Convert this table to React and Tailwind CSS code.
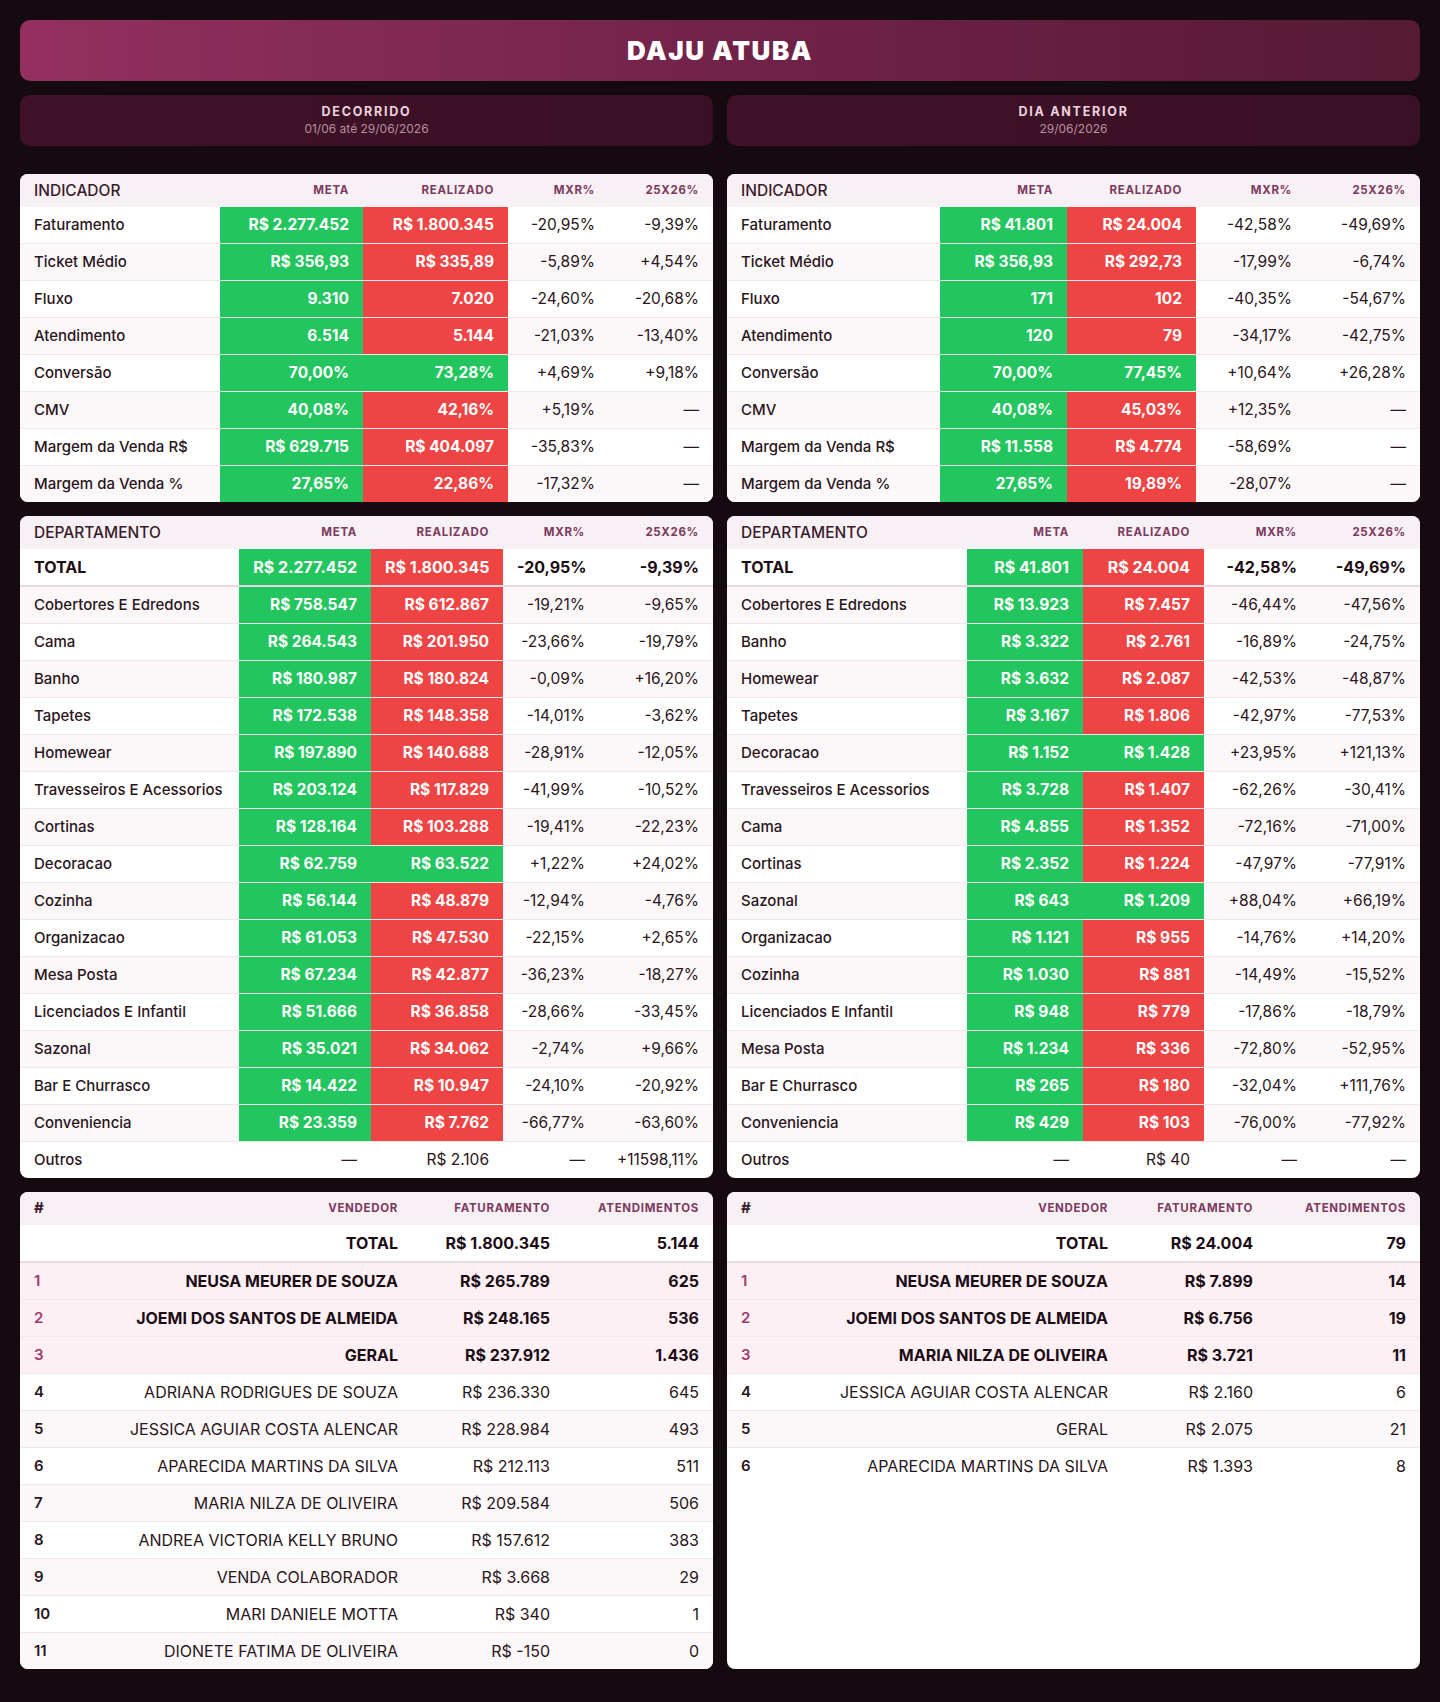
import React from 'react';

const indLeft = [
  ['Faturamento', 'R$ 2.277.452', 'R$ 1.800.345', 'r', '-20,95%', '-9,39%'],
  ['Ticket Médio', 'R$ 356,93', 'R$ 335,89', 'r', '-5,89%', '+4,54%'],
  ['Fluxo', '9.310', '7.020', 'r', '-24,60%', '-20,68%'],
  ['Atendimento', '6.514', '5.144', 'r', '-21,03%', '-13,40%'],
  ['Conversão', '70,00%', '73,28%', 'g', '+4,69%', '+9,18%'],
  ['CMV', '40,08%', '42,16%', 'r', '+5,19%', '—'],
  ['Margem da Venda R$', 'R$ 629.715', 'R$ 404.097', 'r', '-35,83%', '—'],
  ['Margem da Venda %', '27,65%', '22,86%', 'r', '-17,32%', '—'],
];

const indRight = [
  ['Faturamento', 'R$ 41.801', 'R$ 24.004', 'r', '-42,58%', '-49,69%'],
  ['Ticket Médio', 'R$ 356,93', 'R$ 292,73', 'r', '-17,99%', '-6,74%'],
  ['Fluxo', '171', '102', 'r', '-40,35%', '-54,67%'],
  ['Atendimento', '120', '79', 'r', '-34,17%', '-42,75%'],
  ['Conversão', '70,00%', '77,45%', 'g', '+10,64%', '+26,28%'],
  ['CMV', '40,08%', '45,03%', 'r', '+12,35%', '—'],
  ['Margem da Venda R$', 'R$ 11.558', 'R$ 4.774', 'r', '-58,69%', '—'],
  ['Margem da Venda %', '27,65%', '19,89%', 'r', '-28,07%', '—'],
];

const depLeft = {
  total: ['TOTAL', 'R$ 2.277.452', 'R$ 1.800.345', 'r', '-20,95%', '-9,39%'],
  rows: [
    ['Cobertores E Edredons', 'R$ 758.547', 'R$ 612.867', 'r', '-19,21%', '-9,65%'],
    ['Cama', 'R$ 264.543', 'R$ 201.950', 'r', '-23,66%', '-19,79%'],
    ['Banho', 'R$ 180.987', 'R$ 180.824', 'r', '-0,09%', '+16,20%'],
    ['Tapetes', 'R$ 172.538', 'R$ 148.358', 'r', '-14,01%', '-3,62%'],
    ['Homewear', 'R$ 197.890', 'R$ 140.688', 'r', '-28,91%', '-12,05%'],
    ['Travesseiros E Acessorios', 'R$ 203.124', 'R$ 117.829', 'r', '-41,99%', '-10,52%'],
    ['Cortinas', 'R$ 128.164', 'R$ 103.288', 'r', '-19,41%', '-22,23%'],
    ['Decoracao', 'R$ 62.759', 'R$ 63.522', 'g', '+1,22%', '+24,02%'],
    ['Cozinha', 'R$ 56.144', 'R$ 48.879', 'r', '-12,94%', '-4,76%'],
    ['Organizacao', 'R$ 61.053', 'R$ 47.530', 'r', '-22,15%', '+2,65%'],
    ['Mesa Posta', 'R$ 67.234', 'R$ 42.877', 'r', '-36,23%', '-18,27%'],
    ['Licenciados E Infantil', 'R$ 51.666', 'R$ 36.858', 'r', '-28,66%', '-33,45%'],
    ['Sazonal', 'R$ 35.021', 'R$ 34.062', 'r', '-2,74%', '+9,66%'],
    ['Bar E Churrasco', 'R$ 14.422', 'R$ 10.947', 'r', '-24,10%', '-20,92%'],
    ['Conveniencia', 'R$ 23.359', 'R$ 7.762', 'r', '-66,77%', '-63,60%'],
  ],
  outros: ['Outros', '—', 'R$ 2.106', '', '—', '+11598,11%'],
};

const depRight = {
  total: ['TOTAL', 'R$ 41.801', 'R$ 24.004', 'r', '-42,58%', '-49,69%'],
  rows: [
    ['Cobertores E Edredons', 'R$ 13.923', 'R$ 7.457', 'r', '-46,44%', '-47,56%'],
    ['Banho', 'R$ 3.322', 'R$ 2.761', 'r', '-16,89%', '-24,75%'],
    ['Homewear', 'R$ 3.632', 'R$ 2.087', 'r', '-42,53%', '-48,87%'],
    ['Tapetes', 'R$ 3.167', 'R$ 1.806', 'r', '-42,97%', '-77,53%'],
    ['Decoracao', 'R$ 1.152', 'R$ 1.428', 'g', '+23,95%', '+121,13%'],
    ['Travesseiros E Acessorios', 'R$ 3.728', 'R$ 1.407', 'r', '-62,26%', '-30,41%'],
    ['Cama', 'R$ 4.855', 'R$ 1.352', 'r', '-72,16%', '-71,00%'],
    ['Cortinas', 'R$ 2.352', 'R$ 1.224', 'r', '-47,97%', '-77,91%'],
    ['Sazonal', 'R$ 643', 'R$ 1.209', 'g', '+88,04%', '+66,19%'],
    ['Organizacao', 'R$ 1.121', 'R$ 955', 'r', '-14,76%', '+14,20%'],
    ['Cozinha', 'R$ 1.030', 'R$ 881', 'r', '-14,49%', '-15,52%'],
    ['Licenciados E Infantil', 'R$ 948', 'R$ 779', 'r', '-17,86%', '-18,79%'],
    ['Mesa Posta', 'R$ 1.234', 'R$ 336', 'r', '-72,80%', '-52,95%'],
    ['Bar E Churrasco', 'R$ 265', 'R$ 180', 'r', '-32,04%', '+111,76%'],
    ['Conveniencia', 'R$ 429', 'R$ 103', 'r', '-76,00%', '-77,92%'],
  ],
  outros: ['Outros', '—', 'R$ 40', '', '—', '—'],
};

const sellersLeft = {
  total: ['R$ 1.800.345', '5.144'],
  rows: [
    ['NEUSA MEURER DE SOUZA', 'R$ 265.789', '625'],
    ['JOEMI DOS SANTOS DE ALMEIDA', 'R$ 248.165', '536'],
    ['GERAL', 'R$ 237.912', '1.436'],
    ['ADRIANA RODRIGUES DE SOUZA', 'R$ 236.330', '645'],
    ['JESSICA AGUIAR COSTA ALENCAR', 'R$ 228.984', '493'],
    ['APARECIDA MARTINS DA SILVA', 'R$ 212.113', '511'],
    ['MARIA NILZA DE OLIVEIRA', 'R$ 209.584', '506'],
    ['ANDREA VICTORIA KELLY BRUNO', 'R$ 157.612', '383'],
    ['VENDA COLABORADOR', 'R$ 3.668', '29'],
    ['MARI DANIELE MOTTA', 'R$ 340', '1'],
    ['DIONETE FATIMA DE OLIVEIRA', 'R$ -150', '0'],
  ],
};

const sellersRight = {
  total: ['R$ 24.004', '79'],
  rows: [
    ['NEUSA MEURER DE SOUZA', 'R$ 7.899', '14'],
    ['JOEMI DOS SANTOS DE ALMEIDA', 'R$ 6.756', '19'],
    ['MARIA NILZA DE OLIVEIRA', 'R$ 3.721', '11'],
    ['JESSICA AGUIAR COSTA ALENCAR', 'R$ 2.160', '6'],
    ['GERAL', 'R$ 2.075', '21'],
    ['APARECIDA MARTINS DA SILVA', 'R$ 1.393', '8'],
  ],
};

const thSmall = 'h-[33px] px-[14px] text-right text-[11.5px] font-bold tracking-[0.06em] text-[#7d3a5f] uppercase whitespace-nowrap';
const thMain = 'h-[33px] px-[14px] text-left text-[15.5px] font-medium text-[#3a1b2b] whitespace-nowrap';
const td = 'px-[14px] py-2 leading-5 border-b border-[#f1e7ec] whitespace-nowrap';
const num = 'text-right text-[15.5px]';
const tdTotal = 'h-[37px] px-[14px] border-b-2 border-[#e8d9e1] whitespace-nowrap';

const Card = ({ children }) => (
  <div className="bg-white rounded-lg overflow-hidden">{children}</div>
);

const ColorCell = ({ value, tone }) => (
  <td className={`${td} ${num} font-bold text-white ${tone === 'g' ? 'bg-[#22c55e]' : 'bg-[#ef4444]'}`}>{value}</td>
);

const Cols = ({ widths }) => (
  <colgroup>
    {widths.map((w, i) => <col key={i} style={{ width: w }} />)}
  </colgroup>
);

const Head = ({ first }) => (
  <thead>
    <tr className="bg-[#f7f0f4]">
      <th className={thMain}>{first}</th>
      <th className={thSmall}>Meta</th>
      <th className={thSmall}>Realizado</th>
      <th className={thSmall}>MXR%</th>
      <th className={thSmall}>25X26%</th>
    </tr>
  </thead>
);

const IndicatorTable = ({ rows, widths }) => (
  <Card>
    <table className="w-full table-fixed text-[15px] text-[#2a1520]">
      <Cols widths={widths} />
      <Head first="INDICADOR" />
      <tbody>
        {rows.map((r) => (
          <tr key={r[0]} className="even:bg-[#fcf8fa] last:[&>td]:border-b-0">
            <td className={`${td} font-medium`}>{r[0]}</td>
            <ColorCell value={r[1]} tone="g" />
            <ColorCell value={r[2]} tone={r[3]} />
            <td className={`${td} ${num}`}>{r[4]}</td>
            <td className={`${td} ${num}`}>{r[5]}</td>
          </tr>
        ))}
      </tbody>
    </table>
  </Card>
);

const DepartmentTable = ({ data, widths }) => {
  const t = data.total;
  const o = data.outros;
  return (
    <Card>
      <table className="w-full table-fixed text-[15px] text-[#2a1520]">
        <Cols widths={widths} />
        <Head first="DEPARTAMENTO" />
        <tbody>
          <tr className="bg-white text-[16px] font-bold">
            <td className={`${tdTotal} text-[#1c0d15]`}>{t[0]}</td>
            <td className={`${tdTotal} text-right text-white bg-[#22c55e]`}>{t[1]}</td>
            <td className={`${tdTotal} text-right text-white bg-[#ef4444]`}>{t[2]}</td>
            <td className={`${tdTotal} text-right text-[#1c0d15]`}>{t[4]}</td>
            <td className={`${tdTotal} text-right text-[#1c0d15]`}>{t[5]}</td>
          </tr>
          {data.rows.map((r) => (
            <tr key={r[0]} className="even:bg-[#fcf8fa]">
              <td className={`${td} font-medium`}>{r[0]}</td>
              <ColorCell value={r[1]} tone="g" />
              <ColorCell value={r[2]} tone={r[3]} />
              <td className={`${td} ${num}`}>{r[4]}</td>
              <td className={`${td} ${num}`}>{r[5]}</td>
            </tr>
          ))}
          <tr className="even:bg-[#fcf8fa] [&>td]:border-b-0">
            <td className={`${td} font-medium`}>{o[0]}</td>
            <td className={`${td} ${num}`}>{o[1]}</td>
            <td className={`${td} ${num}`}>{o[2]}</td>
            <td className={`${td} ${num}`}>{o[4]}</td>
            <td className={`${td} ${num}`}>{o[5]}</td>
          </tr>
        </tbody>
      </table>
    </Card>
  );
};

const SellerTable = ({ data, widths }) => (
  <Card>
    <table className="w-full table-fixed text-[16px] text-[#2a1520]">
      <Cols widths={widths} />
      <thead>
        <tr className="bg-[#f7f0f4]">
          <th className="h-[33px] px-[14px] text-left text-[15px] font-bold text-[#3a1b2b]">#</th>
          <th className={thSmall}>Vendedor</th>
          <th className={thSmall}>Faturamento</th>
          <th className={thSmall}>Atendimentos</th>
        </tr>
      </thead>
      <tbody>
        <tr className="bg-white font-bold text-[#1c0d15]">
          <td className={tdTotal}></td>
          <td className={`${tdTotal} text-right`}>TOTAL</td>
          <td className={`${tdTotal} text-right`}>{data.total[0]}</td>
          <td className={`${tdTotal} text-right`}>{data.total[1]}</td>
        </tr>
        {data.rows.map((r, i) => {
          const top = i < 3;
          return (
            <tr
              key={r[0]}
              className={`${top ? 'bg-[#fcf0f5] font-bold text-[#1c0d15]' : 'even:bg-[#fcf8fa]'} last:[&>td]:border-b-0`}
            >
              <td className={`${td} text-[15px] font-semibold ${top ? 'text-[#a3386d]' : 'text-[#2a1520]'}`}>{i + 1}</td>
              <td className={`${td} text-right`}>{r[0]}</td>
              <td className={`${td} text-right`}>{r[1]}</td>
              <td className={`${td} text-right`}>{r[2]}</td>
            </tr>
          );
        })}
      </tbody>
    </table>
  </Card>
);

const PeriodCard = ({ title, date }) => (
  <div className="h-[51px] rounded-[10px] bg-gradient-to-r from-[#3f1227] to-[#3a1024] flex flex-col items-center justify-center">
    <div className="text-[12.5px] font-bold tracking-[0.14em] text-[#ecd3df] leading-4">{title}</div>
    <div className="text-[12px] text-[#b7909f] leading-4 mt-[1px]">{date}</div>
  </div>
);

export default function App() {
  return (
    <div className="min-h-screen bg-[#140a0f] px-5 pt-5 pb-[34px]" style={{ fontFamily: 'Inter, "Noto Sans", sans-serif' }}>
      <div className="h-[61px] rounded-[10px] bg-gradient-to-r from-[#94305f] via-[#72234a] to-[#561a33] flex items-center justify-center">
        <h1 className="text-[26px] font-black tracking-[0.06em] text-white">DAJU ATUBA</h1>
      </div>

      <div className="grid grid-cols-2 gap-[14px] mt-[14px]">
        <PeriodCard title="DECORRIDO" date="01/06 até 29/06/2026" />
        <PeriodCard title="DIA ANTERIOR" date="29/06/2026" />
      </div>

      <div className="grid grid-cols-2 gap-[14px] mt-[28px]">
        <IndicatorTable rows={indLeft} widths={[200, 143, 145, 101, 104]} />
        <IndicatorTable rows={indRight} widths={[213, 127, 129, 110, 114]} />
        <DepartmentTable data={depLeft} widths={[219, 132, 132, 96, 114]} />
        <DepartmentTable data={depRight} widths={[240, 116, 121, 107, 109]} />
        <SellerTable data={sellersLeft} widths={[60, 332, 152, 149]} />
        <SellerTable data={sellersRight} widths={[60, 335, 145, 153]} />
      </div>
    </div>
  );
}
